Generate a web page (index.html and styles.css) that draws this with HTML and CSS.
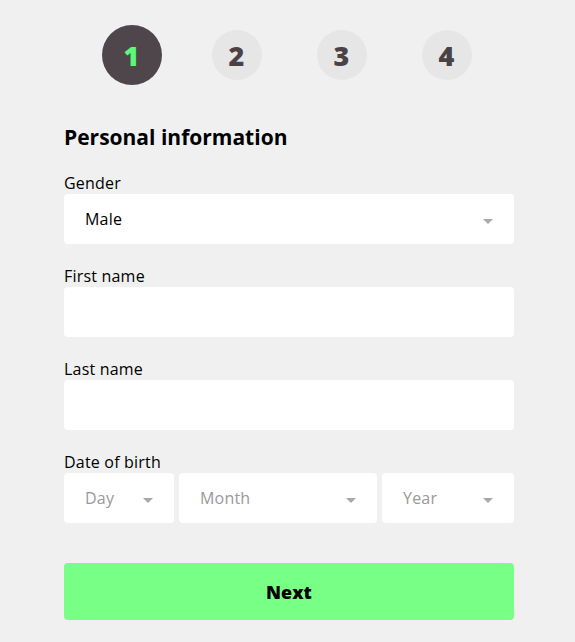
FILE: index.html
```html
<!DOCTYPE html>
<html>
<head>
<meta charset="utf-8">
<link rel="stylesheet" href="styles.css">
</head>
<body>
<div class="page">
  <div class="steps">
    <div class="step-cell"><div class="step active">1</div></div>
    <div class="step-cell"><div class="step">2</div></div>
    <div class="step-cell"><div class="step">3</div></div>
    <div class="step-cell"><div class="step">4</div></div>
  </div>
  <h1 class="title">Personal information</h1>
  <div class="field">
    <div class="label">Gender</div>
    <div class="select"><span class="value">Male</span><span class="caret"></span></div>
  </div>
  <div class="field">
    <div class="label">First name</div>
    <div class="input"></div>
  </div>
  <div class="field">
    <div class="label">Last name</div>
    <div class="input"></div>
  </div>
  <div class="field">
    <div class="label">Date of birth</div>
    <div class="dob">
      <div class="select day"><span class="placeholder">Day</span><span class="caret"></span></div>
      <div class="select month"><span class="placeholder">Month</span><span class="caret"></span></div>
      <div class="select year"><span class="placeholder">Year</span><span class="caret"></span></div>
    </div>
  </div>
  <button class="next">Next</button>
</div>
</body>
</html>
```
FILE: styles.css
```css
html, body {
  margin: 0;
  padding: 0;
  background: #f0f0f0;
}
body {
  font-family: "Open Sans", "Noto Sans", sans-serif;
  color: #000;
}
.page {
  width: 450px;
  margin: 0 0 0 64px;
  padding: 25px 0 0 0;
}
.steps {
  display: grid;
  grid-template-columns: repeat(4, 105px);
  justify-content: center;
  align-items: center;
  height: 60px;
}
.step-cell {
  display: flex;
  justify-content: center;
  align-items: center;
}
.step {
  width: 50px;
  height: 50px;
  border-radius: 50%;
  background: #e6e6e6;
  color: #4b4246;
  font-weight: 800;
  font-size: 27px;
  display: flex;
  align-items: center;
  justify-content: center;
}
.step.active {
  width: 60px;
  height: 60px;
  background: #4f464b;
  color: #5cf878;
}
.title {
  margin: 40px 0 0 0;
  font-size: 21px;
  line-height: 24px;
  font-weight: 700;
}
.field {
  margin-top: 22px;
}
.title + .field {
  margin-top: 24px;
}
.label {
  font-size: 16px;
  line-height: 20px;
  margin-bottom: 1px;
  letter-spacing: 0.2px;
}
.input, .select {
  height: 50px;
  background: #fff;
  border-radius: 4px;
  box-sizing: border-box;
}
.select {
  display: flex;
  align-items: center;
  justify-content: space-between;
  padding: 0 21px;
  font-size: 16px;
  letter-spacing: 0.2px;
}
.caret {
  width: 0;
  height: 0;
  border-left: 5px solid transparent;
  border-right: 5px solid transparent;
  border-top: 5px solid #a8a8a8;
  margin-top: 4px;
}
.placeholder {
  color: #999;
}
.dob {
  display: flex;
  gap: 5px;
}
.day { width: 110px; }
.month { width: 198px; }
.year { width: 132px; }
.next {
  display: block;
  width: 100%;
  margin-top: 40px;
  height: 57px;
  border: none;
  border-radius: 4px;
  background: #78ff85;
  font-family: inherit;
  font-weight: 800;
  font-size: 18px;
  color: #000;
}
```
